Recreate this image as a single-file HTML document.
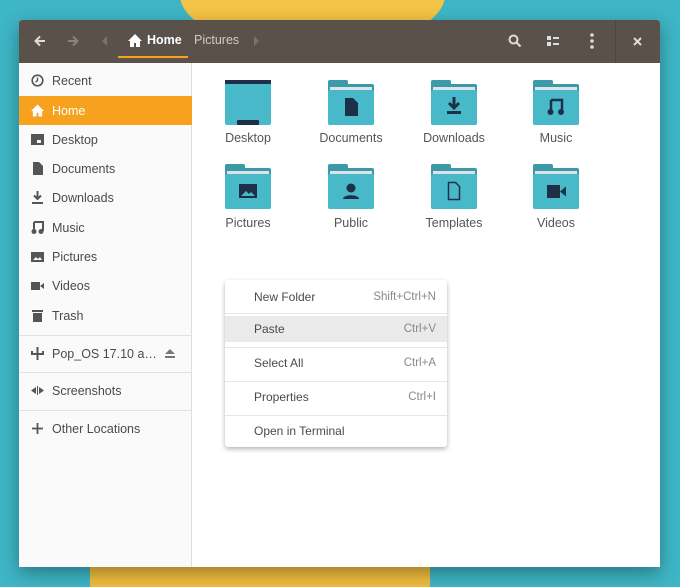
<!DOCTYPE html>
<html style="width:680px;height:587px;overflow:hidden"><head><meta charset="utf-8"><style>
*{margin:0;padding:0;box-sizing:border-box}
body{width:680px;height:587px;overflow:hidden;background:#3eb6c6;font-family:"Liberation Sans",sans-serif;position:relative}
.blobt{position:absolute;left:180px;top:-60px;width:265px;height:110px;background:#f3c445;border-radius:50%}
.blobb{position:absolute;left:90px;top:545px;width:340px;height:42px;background:#f0bd3e;border-radius:40% 50% 0 0}
.win{position:absolute;left:19px;top:20px;width:641px;height:547px;background:#fff;box-shadow:0 6px 18px rgba(0,0,0,.35);border-radius:3px 3px 0 0;overflow:hidden}
.hdr{position:absolute;left:0;top:0;width:641px;height:43px;background:#5a514b}
.hdr .t{position:absolute;color:#fff;font-size:12.5px;top:13px}
.side{position:absolute;left:0;top:43px;width:173px;height:504px;background:#fafafa;border-right:1px solid #ddd}
.it{position:absolute;left:0;width:173px;height:29px;font-size:12.5px;color:#4a4a4a;line-height:30px;padding-left:33px}
.it svg{position:absolute;left:12px;top:8px}
.sep{position:absolute;left:0;width:173px;height:1px;background:#e2e2e2}
.f{position:absolute;width:90px;text-align:center;font-size:12.5px;color:#555}
.menu{position:absolute;left:206px;top:260px;width:222px;height:167px;background:#fff;border-radius:3px;box-shadow:0 2px 5px rgba(0,0,0,.3)}
.mi{position:absolute;left:0;width:222px;height:33px;line-height:33px;font-size:12px;color:#4a4a4a;padding-left:29px}
.mi span{position:absolute;right:11px;color:#888;font-size:11.5px}
.ms{position:absolute;left:0;width:222px;height:1px;background:#e6e6e6}
</style></head><body>
<div class="blobt"></div><div class="blobb"></div>
<div class="win">
<div class="hdr">
<svg style="position:absolute;left:14px;top:14px" width="14" height="14" viewBox="0 0 14 14"><path d="M12 7H3M7 2.5L2.5 7 7 11.5" stroke="#ddd" stroke-width="2" fill="none"/></svg>
<svg style="position:absolute;left:47px;top:14px" width="14" height="14" viewBox="0 0 14 14"><path d="M2 7h9M7 2.5L11.5 7 7 11.5" stroke="#8a827c" stroke-width="2" fill="none"/></svg>
<svg style="position:absolute;left:83px;top:16px" width="6" height="10"><path d="M5 0L0 5 5 10z" fill="#7a726c"/></svg>
<svg style="position:absolute;left:109px;top:14px" width="14" height="13" viewBox="0 0 14 13"><path d="M7 0L0 7h2v6h4V9h2v4h4V7h2z" fill="#fff"/></svg>
<div class="t" style="left:128px;font-weight:bold">Home</div>
<div class="t" style="left:175px;color:#ccc">Pictures</div>
<div style="position:absolute;left:99px;top:36px;width:70px;height:2px;background:#f6a21e"></div>
<svg style="position:absolute;left:235px;top:16px" width="6" height="10"><path d="M0 0L5 5 0 10z" fill="#7a726c"/></svg>
<svg style="position:absolute;left:489px;top:14px" width="14" height="14"><circle cx="5.5" cy="5.5" r="4" stroke="#ddd" stroke-width="2" fill="none"/><path d="M8.5 8.5L12.5 12.5" stroke="#ddd" stroke-width="2"/></svg>
<svg style="position:absolute;left:528px;top:15px" width="12" height="12"><rect x="0" y="1" width="4" height="4" fill="#ddd"/><rect x="0" y="7" width="4" height="4" fill="#ddd"/><rect x="6" y="2" width="6" height="2" fill="#ddd"/><rect x="6" y="8" width="6" height="2" fill="#ddd"/></svg>
<svg style="position:absolute;left:571px;top:13px" width="4" height="16"><circle cx="2" cy="2" r="1.8" fill="#ddd"/><circle cx="2" cy="8" r="1.8" fill="#ddd"/><circle cx="2" cy="14" r="1.8" fill="#ddd"/></svg>
<div style="position:absolute;left:596px;top:0;width:1px;height:43px;background:#4e4640"></div>
<svg style="position:absolute;left:614px;top:17px" width="9" height="9"><path d="M1 1L8 8M8 1L1 8" stroke="#ddd" stroke-width="2"/></svg>
</div>
<div class="side">
<div class="it" style="top:3px"><svg width="13" height="13"><circle cx="6.5" cy="6.5" r="5.3" stroke="#555" stroke-width="1.6" fill="none"/><path d="M6.5 3.5v3.2l-2 1.3" stroke="#555" stroke-width="1.4" fill="none"/></svg>Recent</div>
<div class="it" style="top:33px;background:#f6a21e;color:#fff"><svg width="13" height="13" viewBox="0 0 14 13"><path d="M7 0L0 7h2v6h4V9h2v4h4V7h2z" fill="#fff"/></svg>Home</div>
<div class="it" style="top:62px"><svg width="13" height="13"><rect x="0" y="1" width="13" height="11" fill="#555"/><rect x="6" y="7" width="4" height="3" fill="#fafafa"/></svg>Desktop</div>
<div class="it" style="top:91px"><svg width="13" height="13"><path d="M2 0h6l4 4v9H2z" fill="#555"/></svg>Documents</div>
<div class="it" style="top:120px"><svg width="13" height="13"><path d="M6.5 0v7M3 4.5l3.5 3.5 3.5-3.5M1 12h11" stroke="#555" stroke-width="2" fill="none"/></svg>Downloads</div>
<div class="it" style="top:150px"><svg width="13" height="13"><path d="M3 1h9v9M3 1v9" stroke="#555" stroke-width="2" fill="none"/><circle cx="3" cy="10.5" r="2.5" fill="#555"/><circle cx="10" cy="10.5" r="2.5" fill="#555"/></svg>Music</div>
<div class="it" style="top:179px"><svg width="13" height="13"><rect x="0" y="2" width="13" height="10" fill="#555"/><path d="M2 10l3-3 2 2 2-2 2 3z" fill="#fafafa"/></svg>Pictures</div>
<div class="it" style="top:208px"><svg width="13" height="13"><rect x="0" y="3" width="9" height="8" fill="#555"/><path d="M9 7l4-3v6z" fill="#555"/></svg>Videos</div>
<div class="it" style="top:238px"><svg width="13" height="13"><rect x="1" y="1" width="11" height="2" fill="#555"/><rect x="2" y="4" width="9" height="9" fill="#555"/></svg>Trash</div>
<div class="sep" style="top:272px"></div>
<div class="it" style="top:276px"><svg width="13" height="13"><path d="M6.5 0v13M1 4v3h11V4" stroke="#555" stroke-width="2" fill="none"/></svg>Pop_OS 17.10 a…<svg style="left:146px;top:10px" width="10" height="9"><path d="M5 0L10 5H0z M0 7h10v2H0z" fill="#777"/></svg></div>
<div class="sep" style="top:309px"></div>
<div class="it" style="top:313px"><svg width="13" height="13"><path d="M0 6.5L5 3v7zM13 6.5L8 3v7z" fill="#555"/><rect x="6" y="2" width="1" height="9" fill="#555"/></svg>Screenshots</div>
<div class="sep" style="top:347px"></div>
<div class="it" style="top:351px"><svg width="13" height="13"><path d="M6.5 1v11M1 6.5h11" stroke="#555" stroke-width="1.8"/></svg>Other Locations</div>
</div>
<svg width="0" height="0" style="position:absolute"><defs>
<g id="fd"><rect x="0" y="0" width="20" height="8" rx="2" fill="#3a9aa8"/><rect x="0" y="4" width="46" height="41" rx="2" fill="#3a9aa8"/><rect x="2" y="7" width="42" height="4" fill="#dfe3e5"/><rect x="0" y="10" width="46" height="35" rx="2" fill="#48b9c8"/></g>
</defs></svg>
<svg style="position:absolute;left:206px;top:60px" width="46" height="45"><rect x="0" y="0" width="46" height="45" rx="2" fill="#48b9c8"/><rect x="0" y="0" width="46" height="4" fill="#1e3048"/><rect x="12" y="40" width="22" height="5" rx="1" fill="#1e3048"/></svg>
<svg style="position:absolute;left:309px;top:60px" width="46" height="45"><use href="#fd"/><path d="M17 18h8l5 5v13H17z" fill="#1e3048"/></svg>
<svg style="position:absolute;left:412px;top:60px" width="46" height="45"><use href="#fd"/><path d="M23 17v11M18 23l5 5 5-5" stroke="#1e3048" stroke-width="3" fill="none"/><rect x="16" y="31" width="14" height="3" fill="#1e3048"/></svg>
<svg style="position:absolute;left:514px;top:60px" width="46" height="45"><use href="#fd"/><path d="M18 20h11v12M18 20v12" stroke="#1e3048" stroke-width="2.5" fill="none"/><circle cx="17.5" cy="32" r="3" fill="#1e3048"/><circle cx="28" cy="32" r="3" fill="#1e3048"/></svg>
<div class="f" style="left:184px;top:111px">Desktop</div>
<div class="f" style="left:287px;top:111px">Documents</div>
<div class="f" style="left:390px;top:111px">Downloads</div>
<div class="f" style="left:492px;top:111px">Music</div>
<svg style="position:absolute;left:206px;top:144px" width="46" height="45"><use href="#fd"/><rect x="14" y="20" width="18" height="14" fill="#1e3048"/><path d="M16 32l5-5 3 3 2-2 4 4z" fill="#48b9c8"/></svg>
<svg style="position:absolute;left:309px;top:144px" width="46" height="45"><use href="#fd"/><circle cx="23" cy="24" r="4.5" fill="#1e3048"/><path d="M15 35c0-5 16-5 16 0z" fill="#1e3048"/></svg>
<svg style="position:absolute;left:412px;top:144px" width="46" height="45"><use href="#fd"/><path d="M17.5 18.5h7l4 4v13h-11z" fill="none" stroke="#1e3048" stroke-width="1.5"/></svg>
<svg style="position:absolute;left:514px;top:144px" width="46" height="45"><use href="#fd"/><rect x="14" y="21" width="13" height="13" fill="#1e3048"/><path d="M27 27.5l6-5v10z" fill="#1e3048"/></svg>
<div class="f" style="left:184px;top:196px">Pictures</div>
<div class="f" style="left:287px;top:196px">Public</div>
<div class="f" style="left:390px;top:196px">Templates</div>
<div class="f" style="left:492px;top:196px">Videos</div>
<div class="menu">
<div class="mi" style="top:1px">New Folder<span>Shift+Ctrl+N</span></div>
<div class="ms" style="top:33px"></div>
<div class="mi" style="top:36px;height:26px;line-height:26px;background:#eaeaea">Paste<span>Ctrl+V</span></div>
<div class="ms" style="top:67px"></div>
<div class="mi" style="top:67px">Select All<span>Ctrl+A</span></div>
<div class="ms" style="top:101px"></div>
<div class="mi" style="top:101px">Properties<span>Ctrl+I</span></div>
<div class="ms" style="top:135px"></div>
<div class="mi" style="top:135px">Open in Terminal</div>
</div>
</div>
</body></html>
